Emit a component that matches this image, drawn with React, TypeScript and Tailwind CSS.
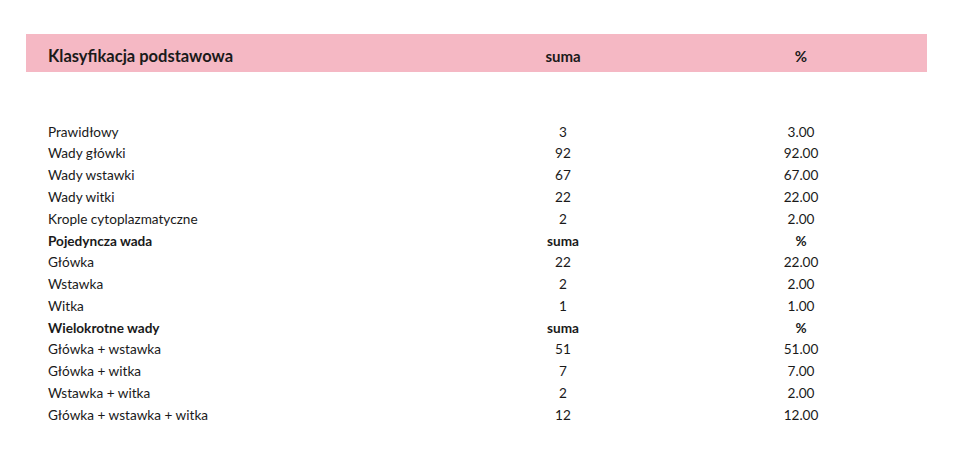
const rows: { label: string; sum: string; pct: string; bold?: boolean }[] = [
  { label: "Prawidłowy", sum: "3", pct: "3.00" },
  { label: "Wady główki", sum: "92", pct: "92.00" },
  { label: "Wady wstawki", sum: "67", pct: "67.00" },
  { label: "Wady witki", sum: "22", pct: "22.00" },
  { label: "Krople cytoplazmatyczne", sum: "2", pct: "2.00" },
  { label: "Pojedyncza wada", sum: "suma", pct: "%", bold: true },
  { label: "Główka", sum: "22", pct: "22.00" },
  { label: "Wstawka", sum: "2", pct: "2.00" },
  { label: "Witka", sum: "1", pct: "1.00" },
  { label: "Wielokrotne wady", sum: "suma", pct: "%", bold: true },
  { label: "Główka + wstawka", sum: "51", pct: "51.00" },
  { label: "Główka + witka", sum: "7", pct: "7.00" },
  { label: "Wstawka + witka", sum: "2", pct: "2.00" },
  { label: "Główka + wstawka + witka", sum: "12", pct: "12.00" },
];

export default function App() {
  return (
    <div className="h-[454px] w-[973px] bg-white pl-[26px] pt-[34px] font-['Lato','Liberation_Sans',sans-serif] text-[#1a1a1a]">
      <div className="grid h-[38px] w-[901px] grid-cols-[425px_224px_252px] items-baseline bg-[#f5b8c4] pt-[10px] font-bold">
        <div className="pl-[22px] text-[16.5px]">Klasyfikacja podstawowa</div>
        <div className="text-center text-[15px]">suma</div>
        <div className="text-center text-[15px]">%</div>
      </div>

      <div className="mt-[49px] w-[901px]">
        {rows.map((row) => (
          <div
            key={row.label}
            className={`grid h-[21.77px] grid-cols-[425px_224px_252px] items-center text-[13.6px] ${row.bold ? "font-bold" : ""}`}
          >
            <div className="pl-[22px]">{row.label}</div>
            <div className="text-center">{row.sum}</div>
            <div className="text-center">{row.pct}</div>
          </div>
        ))}
      </div>
    </div>
  );
}
